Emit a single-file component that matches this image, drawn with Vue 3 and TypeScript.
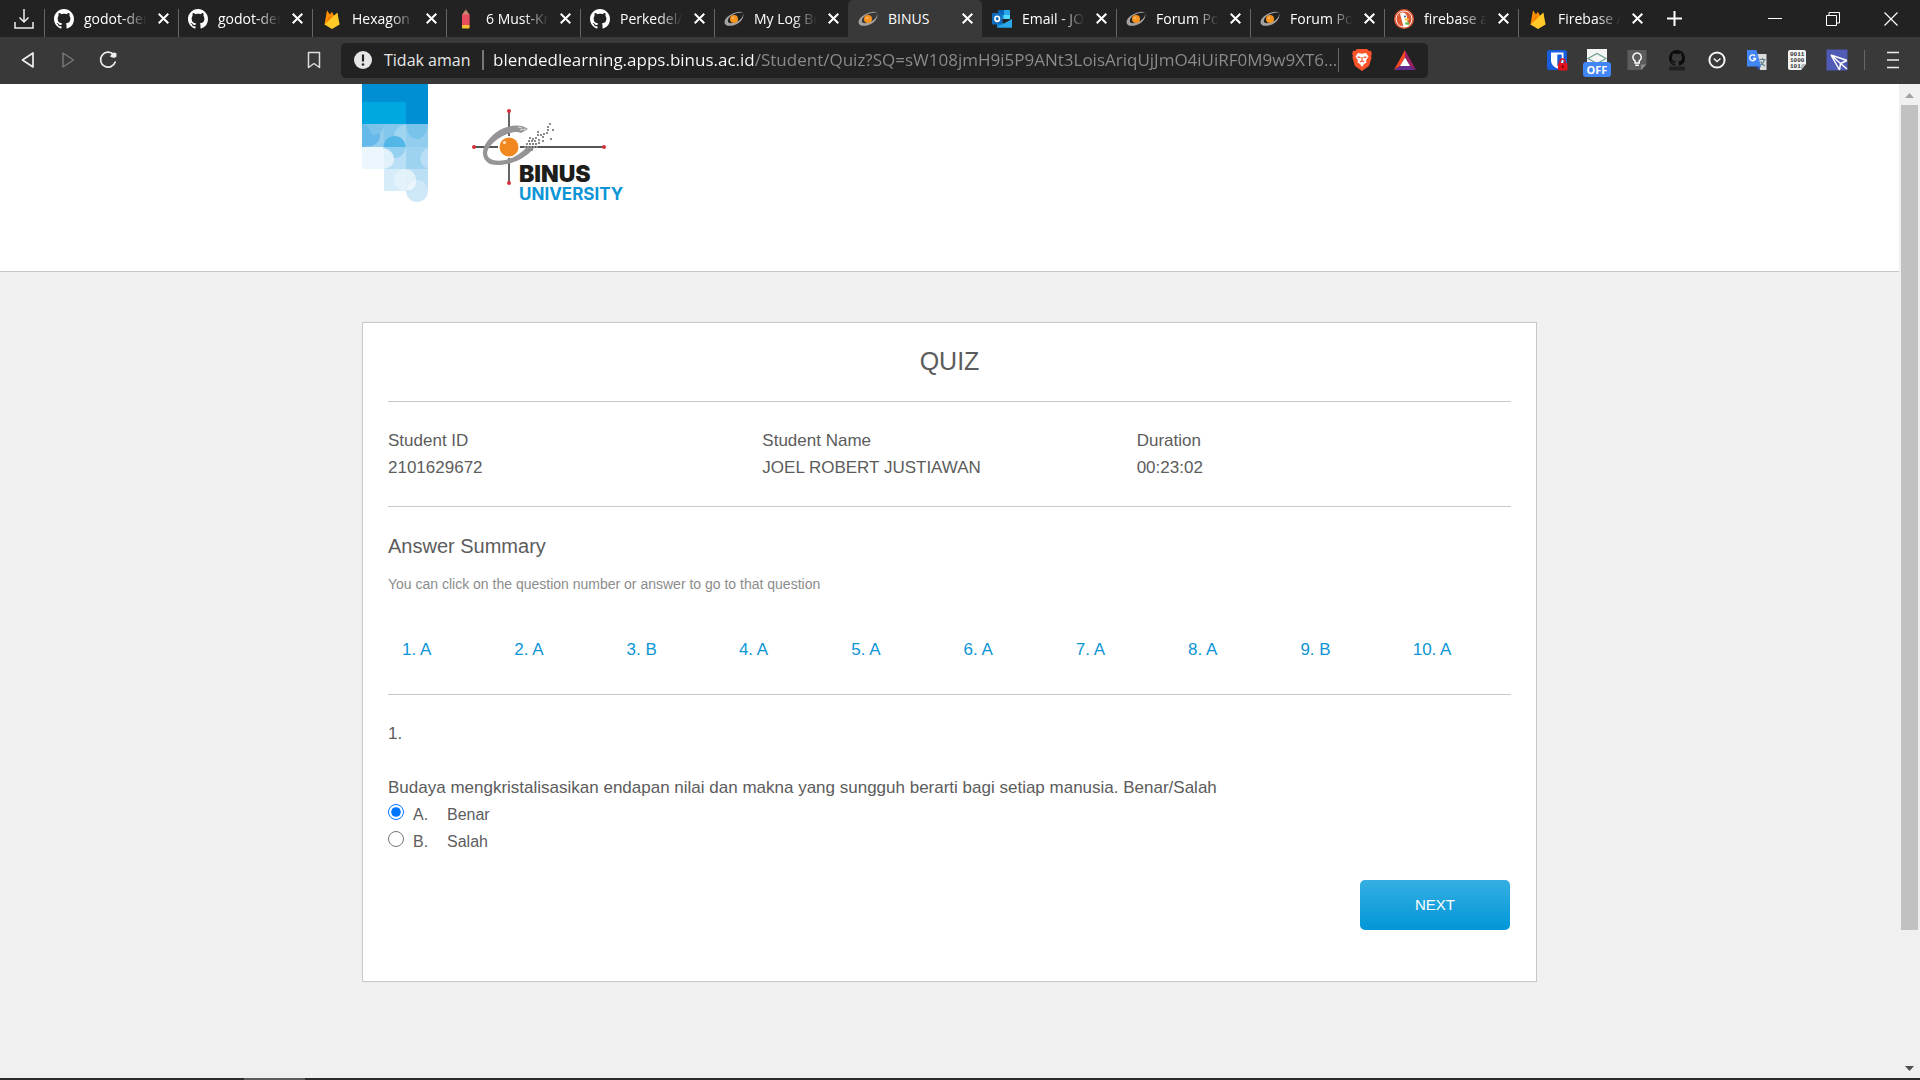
<script setup lang="ts">
import { ref } from 'vue'

interface Tab {
  icon: string
  title: string
  active?: boolean
}

const tabs: Tab[] = [
  { icon: 'github', title: 'godot-demo' },
  { icon: 'github', title: 'godot-demo' },
  { icon: 'firebase', title: 'Hexagon' },
  { icon: 'pencil', title: '6 Must-Know' },
  { icon: 'github', title: 'Perkedel/H' },
  { icon: 'binus', title: 'My Log Book' },
  { icon: 'binus', title: 'BINUS', active: true },
  { icon: 'outlook', title: 'Email - JOE' },
  { icon: 'binus', title: 'Forum Post' },
  { icon: 'binus', title: 'Forum Post' },
  { icon: 'duck', title: 'firebase au' },
  { icon: 'firebase', title: 'Firebase Au' },
]

const address = ref(
  'blendedlearning.apps.binus.ac.id/Student/Quiz?SQ=sW108jmH9i5P9ANt3LoisAriqUjJmO4iUiRF0M9w9XT6…',
)

const extensions = [
  { id: 'bitwarden', name: 'Password vault' },
  { id: 'mail', name: 'Mail checker', badge: 'OFF' },
  { id: 'bulb', name: 'Notes' },
  { id: 'octocat', name: 'Repository' },
  { id: 'clock', name: 'Clock' },
  { id: 'translate', name: 'Translate' },
  { id: 'binary', name: 'Binary' },
  { id: 'plane', name: 'Send' },
]

const student = [
  { label: 'Student ID', value: '2101629672' },
  { label: 'Student Name', value: 'JOEL ROBERT JUSTIAWAN' },
  { label: 'Duration', value: '00:23:02' },
]

const answers = ['A', 'A', 'B', 'A', 'A', 'A', 'A', 'A', 'B', 'A']

const options = [
  { key: 'A', text: 'Benar' },
  { key: 'B', text: 'Salah' },
]
const picked = ref('A')

/* Pixel fragments at the tail of the logo's orbit */
const fragments: [number, number][] = [
  [53, 41], [56, 41], [59, 41], [52, 38], [55, 38], [58, 38], [61, 38], [64, 38],
  [54, 35], [57, 35], [60, 35], [63, 35], [56, 32], [59, 32], [62, 32], [66, 34],
  [57, 29], [60, 30], [63, 29], [66, 31], [70, 28], [65, 26], [68, 26], [71, 25],
  [65, 23], [70, 32], [78, 30], [74, 24], [75, 18], [75, 21], [77, 15], [80, 21],
]
</script>

<template>
  <div class="window">
    <svg class="defs" aria-hidden="true">
      <symbol id="github" viewBox="0 0 16 16">
        <path d="M8 0C3.58 0 0 3.58 0 8c0 3.54 2.29 6.53 5.47 7.59.4.07.55-.17.55-.38 0-.19-.01-.82-.01-1.49-2.01.37-2.53-.49-2.69-.94-.09-.23-.48-.94-.82-1.13-.28-.15-.68-.52-.01-.53.63-.01 1.08.58 1.23.82.72 1.21 1.87.87 2.33.66.07-.52.28-.87.51-1.07-1.78-.2-3.64-.89-3.64-3.95 0-.87.31-1.59.82-2.15-.08-.2-.36-1.02.08-2.12 0 0 .67-.21 2.2.82.64-.18 1.32-.27 2-.27.68 0 1.36.09 2 .27 1.53-1.04 2.2-.82 2.2-.82.44 1.1.16 1.92.08 2.12.51.56.82 1.27.82 2.15 0 3.07-1.87 3.75-3.65 3.95.29.25.54.73.54 1.48 0 1.07-.01 1.93-.01 2.2 0 .21.15.46.55.38A8.013 8.013 0 0016 8c0-4.42-3.58-8-8-8z" fill="currentColor" />
      </symbol>
      <symbol id="firebase" viewBox="0 0 20 20">
        <path d="M2.500 15.500 5 1.200 8 5.600 9.800 2.800 17 15.500z" fill="#ff9100" />
        <path d="M2.500 15.500 8 6 9.800 9z" fill="#f57c00" />
        <path d="M2.500 15.500 15.400 3.500 17.600 15.600 10 20z" fill="#ffca28" />
      </symbol>
      <symbol id="pencil" viewBox="0 0 20 20">
        <path d="M6 6 9.800 0 13.600 6z" fill="#c98a6b" />
        <path d="M8.800 1.800 9.800 0l1 1.800z" fill="#4a3a34" />
        <path d="M6 5.500h7.600V16H6z" fill="#ea4c5f" />
        <path d="M6 16h7.600v2.500q0 1-1 1H7q-1 0-1-1z" fill="#f2c230" />
      </symbol>
      <symbol id="binus" viewBox="0 0 20 20">
        <path d="M19.500 3.500C14 1 4 5.500 1 11c-2.500 6 5 7.500 12 4 5-3 7.500-7.500 6-10.500.500 3.500-3 7-7 8.500-4.500 2-9 1.500-8-2C5 6.500 12.500 3 19.500 3.500z" fill="#a5a29f" />
        <circle cx="10" cy="10" r="4" fill="#f7931e" />
        <circle cx="9" cy="9" r="1.200" fill="#ffb45c" />
      </symbol>
      <symbol id="outlook" viewBox="0 0 20 20">
        <path d="M6 1h12v9H6z" fill="#28a8ea" />
        <path d="M6 1h6v5H6z" fill="#0364b8" />
        <path d="M12 6h6v4h-6z" fill="#50d9ff" />
        <path d="M5 11l7.500 4 7.500-5v8.500H5z" fill="#1490df" />
        <path d="M5 18.500 20 10v8.500z" fill="#28a8ea" />
        <rect y="4" width="10.500" height="11.500" rx="1" fill="#0f6cbd" />
        <ellipse cx="5.200" cy="9.800" rx="2.300" ry="2.600" fill="none" stroke="#fff" stroke-width="1.600" />
      </symbol>
      <symbol id="duck" viewBox="0 0 20 20">
        <circle cx="10" cy="10" r="10" fill="#de5833" />
        <circle cx="10" cy="10" r="8" fill="none" stroke="#fff" stroke-width=".9" />
        <path d="M6 4.500q4-2.500 6.500 1.500 1 2 .500 5l2 6q-3.500 1.500-5.500 1z" fill="#fff" />
        <path d="M10.500 9.500q4-.500 5 .500-1 1.500-4.500 1.500z" fill="#fc3" />
        <path d="M11 13.500l4-.500v3l-3.500-.500z" fill="#67bd47" />
        <circle cx="11" cy="7.500" r=".9" fill="#2d4f8e" />
      </symbol>
      <symbol id="bitwarden" viewBox="0 0 22 22">
        <rect x="1" y="1" width="20" height="20" rx="2.500" fill="#175ddc" />
        <path d="M5 3.500h12.500v8q0 5-6.300 8Q5 16.500 5 11.500z" fill="#fff" />
        <path d="M11.300 5.500h4.400v6q0 3-4.400 5.400z" fill="#175ddc" />
        <path d="M14 14v-1.500a2.500 2.500 0 015 0V14" fill="none" stroke="#d8171f" stroke-width="1.600" />
        <rect x="12" y="14" width="9.500" height="7.500" rx="1" fill="#e2131d" />
        <path d="M16.700 16.500v2.500" stroke="#5b0000" stroke-width="1.400" />
      </symbol>
      <symbol id="mail" viewBox="0 0 22 22">
        <rect x="1" y="0" width="20" height="18" fill="#f4f4f4" />
        <path d="M2 9.500 11 4.500l9 5-9 5z" fill="none" stroke="#6fa08d" stroke-width="1.200" />
      </symbol>
      <symbol id="bulb" viewBox="0 0 22 22">
        <path d="M1.500 1h19v14l-5 6h-14z" fill="#5c5c5c" />
        <path d="M20.500 15.500 15 21v-5.500z" fill="#8a8a8a" />
        <path d="M9 14v-2.200a4.200 4.200 0 114.200 0V14zM9.300 16.300h3.600" fill="none" stroke="#fff" stroke-width="1.500" />
      </symbol>
      <symbol id="octocat" viewBox="0 0 22 22">
        <svg x="3" y="1" width="16" height="16" viewBox="0 0 16 16"><use href="#github" color="#0c0c0c" /></svg>
        <rect x="3" y="17.500" width="16" height="4" rx="1" fill="#222" />
      </symbol>
      <symbol id="clock" viewBox="0 0 22 22">
        <circle cx="11" cy="11" r="7.600" fill="none" stroke="#f4f4f4" stroke-width="2" />
        <path d="M7.800 9.500 11 12.500l3.500-3" fill="none" stroke="#f4f4f4" stroke-width="1.500" />
      </symbol>
      <symbol id="translate" viewBox="0 0 22 22">
        <path d="M10 5h10.500v16H14z" fill="#dcdcdc" />
        <path d="M13.500 10.500h6M16.500 9v1.500M18.500 10.500q-1 4-4.500 6M14.500 12.500q1.500 3 4.500 4.500" fill="none" stroke="#5f7f8f" stroke-width="1.200" />
        <path d="M1 1h9.500L15 17.500H1z" fill="#4285f4" />
        <path d="M10.500 17.500H15L12 21z" fill="#2554c0" />
        <path d="M9 7A2.900 2.900 0 109.500 9.500H7" fill="none" stroke="#fff" stroke-width="1.400" />
      </symbol>
      <symbol id="binary" viewBox="0 0 22 22">
        <path d="M4 1h14q2 0 2 2v12l-5 6H4q-2 0-2-2V3q0-2 2-2z" fill="#f2f2f2" />
        <path d="M20 15l-5 6v-4q0-2 2-2z" fill="#b9b9b9" />
      </symbol>
      <symbol id="plane" viewBox="0 0 22 22">
        <rect x=".5" y=".5" width="21" height="21" fill="#4f5bb5" />
        <path d="M5 6 21 11.500M5 6l8.500 15M5 6l9.500 8.500M14.500 14.500 21 11.500M14.500 14.500l-1 6.500M14.500 14.500 21 20" fill="none" stroke="#fff" stroke-width="1.500" />
      </symbol>
    </svg>

    <header class="tabstrip">
      <button class="downloads" aria-label="Downloads">
        <svg width="20" height="20" viewBox="0 0 20 20">
          <path d="M10 0v13M5.500 8.500 10 13l4.500-4.500M1 13v6h18v-6" fill="none" stroke="#eee" stroke-width="1.500" />
        </svg>
      </button>
      <div v-for="(tab, i) in tabs" :key="i" class="tab" :class="{ active: tab.active, plain: tabs[i - 1]?.active }">
        <svg class="favicon" width="20" height="20"><use :href="'#' + tab.icon" /></svg>
        <span class="title">{{ tab.title }}</span>
        <button class="close" :aria-label="'Close ' + tab.title">
          <svg width="11" height="11" viewBox="0 0 11 11"><path d="M.7.7l9.600 9.600M10.300.7.7 10.300" stroke="#fff" stroke-width="2" /></svg>
        </button>
      </div>
      <button class="new-tab" aria-label="New tab">
        <svg width="15" height="15" viewBox="0 0 15 15"><path d="M7.500 0v15M0 7.500h15" stroke="#fff" stroke-width="2" /></svg>
      </button>
      <div class="controls">
        <button aria-label="Minimize"><svg width="14" height="14"><path d="M0 6.500h14" stroke="#fff" /></svg></button>
        <button aria-label="Restore"><svg width="14" height="14"><path d="M.5 3.500h10v10H.5zM3 3.500v-3h10.500V11H11" fill="none" stroke="#fff" /></svg></button>
        <button aria-label="Close window"><svg width="14" height="14"><path d="M.5.5l13 13M13.500.5l-13 13" stroke="#fff" stroke-width="1.200" /></svg></button>
      </div>
    </header>

    <nav class="toolbar">
      <div class="nav-buttons">
        <button aria-label="Back"><svg width="18" height="18" viewBox="0 0 18 18"><path d="M14 2v14L3.500 9z" fill="none" stroke="#eee" stroke-width="1.700" stroke-linejoin="round" /></svg></button>
        <button aria-label="Forward"><svg width="18" height="18" viewBox="0 0 18 18"><path d="M4 2v14L14.500 9z" fill="none" stroke="#777" stroke-width="1.500" stroke-linejoin="round" /></svg></button>
        <button aria-label="Reload">
          <svg width="18" height="18" viewBox="0 0 18 18">
            <path d="M14.500 3.500A7.500 7.500 0 1016.200 11" fill="none" stroke="#eee" stroke-width="1.700" stroke-linecap="round" />
            <path d="M11 5.500q4.500 2.500 6.500 0V2.500q-3-2-4.500 0z" fill="#eee" />
          </svg>
        </button>
      </div>
      <button class="bookmark" aria-label="Bookmark">
        <svg width="14" height="18" viewBox="0 0 14 18"><path d="M1.500 1.500h11v15L7 12.500l-5.500 4z" fill="none" stroke="#ddd" stroke-width="1.500" stroke-linejoin="round" /></svg>
      </button>
      <div class="omnibox">
        <svg class="info" width="18" height="18" viewBox="0 0 18 18">
          <circle cx="9" cy="9" r="9" fill="#e6e6e6" />
          <path d="M9 3.500v7" stroke="#222" stroke-width="2.200" /><circle cx="9" cy="13.500" r="1.300" fill="#222" />
        </svg>
        <label class="secure" for="address">Tidak aman</label>
        <input id="address" v-model="address" class="address" type="text" spellcheck="false">
        <button class="shield" aria-label="Shields">
          <svg width="20" height="22" viewBox="0 0 20 22">
            <path d="M5 0h10l2 2 2-.2.8 3.200-.800 2 .600 1.500-2.600 8.500L10 22l-7-5L.4 8.500 1 7 .2 5 1 1.800 3 2z" fill="#fb542b" />
            <path d="M6 4l4 .8L14 4l2.500 3.500-2.500 4 .500 2L12 15l-2 3-2-3-2.500-1.500.500-2-2.500-4z" fill="#fff" />
            <path d="M5.500 7.800l3 .8M14.500 7.800l-3 .8M10 8v3.500M8 13l2-1.200L12 13" fill="none" stroke="#fb542b" stroke-width="1.200" />
          </svg>
        </button>
        <button class="rewards" aria-label="Rewards">
          <svg width="22" height="20" viewBox="0 0 22 20">
            <path d="M11 0 0 20l6-4 5-9z" fill="#ff4724" />
            <path d="M11 0l11 20-6-4-5-9z" fill="#9e1f63" />
            <path d="M0 20h22l-6-4H6z" fill="#662d91" />
            <path d="M11 7.500 16 16H6z" fill="#fff" />
          </svg>
        </button>
      </div>
      <div class="extensions">
        <button v-for="ext in extensions" :key="ext.id" :aria-label="ext.name">
          <svg width="22" height="22">
            <use :href="'#' + ext.id" />
            <template v-if="ext.id === 'binary'">
              <text class="bits" x="4" y="7">0011</text>
              <text class="bits" x="4" y="13">1000</text>
              <text class="bits" x="4" y="19">101</text>
            </template>
          </svg>
          <span v-if="ext.badge" class="badge">{{ ext.badge }}</span>
        </button>
      </div>
      <button class="menu" aria-label="Menu">
        <svg width="12" height="18" viewBox="0 0 12 18"><path d="M0 1.500h12M0 9h12M0 16.500h12" stroke="#eee" stroke-width="1.700" /></svg>
      </button>
    </nav>

    <div class="viewport">
      <div class="page">
        <header class="site-header">
          <div class="container brand">
            <svg class="ribbon" width="66" height="118" viewBox="0 0 66 118">
              <path d="M0 0h66v40H0z" fill="#008fd3" />
              <path d="M0 18h44v22H0z" fill="#00a8e1" />
              <path d="M0 40h66v23H0z" fill="#93cdee" />
              <path d="M0 40h10a11.500 11.500 0 010 22l-10 1z" fill="#66b9e8" />
              <path d="M2 40h20a11 11 0 01-12 11q0-6-8-11z" fill="#7cc3eb" />
              <path d="M22 40h22v23H22z" fill="#83c8ec" />
              <path d="M33 56a11 11 0 0111-15v22z" fill="#a0d5f1" />
              <path d="M44 40h22q-2 15-11 15T44 40z" fill="#79c3ea" />
              <path d="M0 63h22v22H0z" fill="#ecf6fd" />
              <path d="M22 63h22v22H22z" fill="#b8dff5" />
              <circle cx="32.500" cy="63" r="11" fill="#94d1f0" />
              <path d="M21.500 63a11 11 0 0122 0z" fill="#52b7e7" />
              <path d="M22 64q10 3 10 11t-10 10z" fill="#e1f1fb" />
              <path d="M44 63h22v22H44z" fill="#9dd2f1" />
              <path d="M66 64a11 11 0 000 21z" fill="#b9def5" />
              <path d="M22 85h22v22H22z" fill="#d6ecf9" />
              <path d="M44 85h22v22H44z" fill="#bbdff5" />
              <circle cx="43" cy="96" r="11" fill="#e4f3fb" fill-opacity=".9" />
              <circle cx="55" cy="107" r="11" fill="#cee8f8" />
              <path d="M44 106a11 11 0 0110-10q1 7-5 10z" fill="#eaf5fc" />
            </svg>
            <svg class="logo" width="155" height="95" viewBox="0 0 155 95" role="img" aria-label="BINUS University">
              <path d="M37 3v72M2 39h130" stroke="#555" stroke-width="1.800" />
              <path d="M56 21C47 14 29 18 19 29 9 39 8 51 18 56c13 4 34-3 44-16l-7-1C46 49 31 55 21 52c-9-3-7-11 1-18 9-8 21-12 27-9z" fill="#969496" />
              <path d="M46 19l4 1M48 22l6-1" stroke="#fff" stroke-width=".7" />
              <rect v-for="([x, y], i) in fragments" :key="i" :x="x" :y="y" width="2" height="2" fill="#8a8a8a" />
              <circle cx="37" cy="39" r="11" fill="#fff" />
              <circle cx="37" cy="39" r="9.500" fill="#f0871f" />
              <circle cx="32.500" cy="34.500" r="1.600" fill="#ffe4c0" />
              <g fill="#d8303a">
                <circle cx="37" cy="3" r="2" /><circle cx="37" cy="75" r="2" /><circle cx="2" cy="39" r="2" /><circle cx="132" cy="39" r="2" />
              </g>
              <text class="logo-name" x="47" y="74">BINUS</text>
              <text class="logo-kind" x="47" y="92">UNIVERSITY</text>
            </svg>
          </div>
        </header>

        <main class="container card">
          <h1>QUIZ</h1>
          <dl class="section student">
            <div v-for="item in student" :key="item.label">
              <dt>{{ item.label }}</dt>
              <dd>{{ item.value }}</dd>
            </div>
          </dl>
          <section class="section summary">
            <h2>Answer Summary</h2>
            <p class="hint">You can click on the question number or answer to go to that question</p>
            <ol class="answers">
              <li v-for="(answer, i) in answers" :key="i"><a href="#question">{{ i + 1 }}. {{ answer }}</a></li>
            </ol>
          </section>
          <form id="question" class="section question" @submit.prevent>
            <p>1.</p>
            <p class="prompt">Budaya mengkristalisasikan endapan nilai dan makna yang sungguh berarti bagi setiap manusia. Benar/Salah</p>
            <label v-for="opt in options" :key="opt.key" class="option">
              <input v-model="picked" type="radio" name="answer" :value="opt.key">
              <span class="key">{{ opt.key }}.</span>
              <span>{{ opt.text }}</span>
            </label>
            <button class="next" type="submit">NEXT</button>
          </form>
        </main>
      </div>
      <div class="scrollbar" aria-hidden="true">
        <svg width="21" height="21"><path d="M6 14h9l-4.500-5z" fill="#a3a3a3" /></svg>
        <div class="track"><div class="thumb"></div></div>
        <svg width="21" height="21"><path d="M6 9h9l-4.500 5z" fill="#505050" /></svg>
      </div>
    </div>
    <div class="taskbar"><span></span></div>
  </div>
</template>

<style>
body {
  background: #f0f0f0;
}
</style>

<style scoped>
.window {
  display: flex;
  flex-direction: column;
  min-height: 100vh;
  font-family: "Liberation Sans", Arial, sans-serif;
  color: #5c5c5c;
}
.window * {
  box-sizing: border-box;
}
.defs {
  position: absolute;
  width: 0;
  height: 0;
}
button {
  display: flex;
  align-items: center;
  justify-content: center;
  padding: 0;
  border: 0;
  background: none;
  font-family: inherit;
}
h1, h2, p, dl, dd, ol {
  margin: 0;
  padding: 0;
  font-weight: 400;
}
.bits {
  font: 700 6px "Liberation Mono", monospace;
  fill: #333;
}

/* Browser tabs */
.tabstrip {
  display: flex;
  height: 37px;
  background: #222;
  color: #fff;
  font-family: "Open Sans", "Noto Sans", sans-serif;
}
.downloads {
  width: 44px;
  padding-left: 4px;
}
.tab {
  display: flex;
  align-items: center;
  flex: 0 1 134px;
  min-width: 0;
  padding: 0 9px 0 10px;
  background: linear-gradient(#666, #666) 0 9px / 1px 28px no-repeat;
}
.tab.plain {
  background: none;
}
.tab.active {
  background: #393939;
  border-radius: 5px 5px 0 0;
}
.favicon {
  flex: none;
}
.title {
  flex: 1;
  margin-left: 10px;
  overflow: hidden;
  white-space: nowrap;
  font-size: 14px;
  line-height: 37px;
  mask-image: linear-gradient(to right, #000 60%, transparent 98%);
}
.active .title {
  mask-image: none;
}
.close {
  flex: none;
  width: 11px;
  margin: 0 0 0 10px;
}
.new-tab {
  width: 44px;
}
.controls {
  display: flex;
  margin-left: auto;
}
.controls button {
  width: 58px;
}

/* Address toolbar */
.toolbar {
  display: flex;
  align-items: center;
  height: 47px;
  padding-bottom: 1px;
  background: #393939;
  color: #e8e8e8;
  font-family: "Open Sans", "Noto Sans", sans-serif;
}
.nav-buttons {
  display: flex;
  flex: none;
  margin-left: 8px;
}
.nav-buttons button {
  width: 40px;
}
.bookmark {
  flex: none;
  width: 34px;
  margin-left: 169px;
}
.omnibox {
  display: flex;
  align-items: center;
  flex: 0 1 1087px;
  min-width: 0;
  height: 35px;
  margin-left: 10px;
  padding: 0 12px 0 13px;
  border-radius: 5px;
  background: #222;
}
.info {
  flex: none;
}
.secure {
  flex: none;
  width: 100px;
  margin-left: 12px;
  border-right: 2px solid #777;
  font-size: 16px;
  line-height: 20px;
}
.address {
  flex: 1;
  min-width: 0;
  height: 24px;
  padding: 0 0 1px 9px;
  border: 0;
  border-right: 1px solid #666;
  outline: 0;
  font: 17px "Open Sans", "Noto Sans", sans-serif;
  background: linear-gradient(to right, #fff 270px, #8c8c8c 270px) text;
  color: transparent;
}
.shield {
  margin-left: 13px;
}
.rewards {
  margin-left: 22px;
}
.extensions {
  display: flex;
  flex: none;
  margin-left: auto;
}
.extensions button {
  position: relative;
  width: 40px;
  height: 34px;
}
.badge {
  position: absolute;
  left: 6px;
  bottom: 0;
  width: 28px;
  border-radius: 3px;
  background: #4285f4;
  color: #fff;
  font-size: 11px;
  font-weight: 700;
  line-height: 15px;
  text-align: center;
}
.menu {
  flex: none;
  width: 56px;
  height: 20px;
  margin-left: 7px;
  border-left: 1px solid #666;
}

/* Page */
.viewport {
  display: flex;
  flex: 1;
}
.page {
  flex: 1;
  min-width: 0;
  padding-bottom: 50px;
}
.container {
  max-width: 1175px;
  margin: 0 auto;
}
.site-header {
  height: 188px;
  border-bottom: 1px solid #c8c8c8;
  background: #fff;
}
.brand {
  display: flex;
  align-items: flex-start;
  gap: 44px;
}
.logo {
  margin-top: 24px;
}
.logo-name {
  font: 900 23px Inter, sans-serif;
  fill: #1d1d1b;
}
.logo-kind {
  font: 700 17px Inter, sans-serif;
  fill: #0d95d6;
}
.card {
  margin-top: 50px;
  padding: 0 25px;
  border: 1px solid #c8c8c8;
  background: #fff;
  font-size: 17px;
  line-height: 27px;
}
h1 {
  padding-bottom: 2px;
  font-size: 25px;
  line-height: 76px;
  text-align: center;
}
.section {
  padding: 25px 0;
  border-top: 1px solid #c8c8c8;
}
.student {
  display: grid;
  grid-template-columns: repeat(3, 1fr);
}
.summary {
  padding-bottom: 31px;
}
h2 {
  font-size: 20px;
  line-height: 28px;
}
.hint {
  margin-top: 14px;
  color: #8c8c8c;
  font-size: 14px;
  line-height: 21px;
}
.answers {
  display: grid;
  grid-template-columns: repeat(10, 1fr);
  margin-top: 41px;
  list-style: none;
}
.answers li {
  padding-left: 14px;
}
.answers a {
  color: #0d95d6;
  text-decoration: none;
}
.question {
  padding-bottom: 51px;
}
.prompt {
  margin-top: 27px;
}
.option {
  display: flex;
  align-items: flex-start;
  font-size: 16px;
}
.option input {
  width: 16px;
  height: 16px;
  margin: 3px 9px 0 0;
  accent-color: #0075ff;
}
.key {
  width: 34px;
}
.next {
  width: 150px;
  height: 50px;
  margin: 25px 1px 0 auto;
  padding-bottom: 2px;
  border-radius: 5px;
  background: linear-gradient(#36aee2, #0097d8);
  color: #fff;
  font-size: 15px;
}

/* Scrollbar and taskbar edge */
.scrollbar {
  display: flex;
  flex-direction: column;
  width: 21px;
  background: #f0f0f0;
}
.scrollbar svg {
  flex: none;
}
.track {
  flex: 1;
  padding: 0 2px;
}
.thumb {
  height: 86.7%;
  background: #c1c1c1;
}
.taskbar {
  height: 2px;
  padding-left: 244px;
  background: #2e2b2c;
}
.taskbar span {
  display: block;
  width: 61px;
  height: 2px;
  background: #5d5b5c;
}
</style>
